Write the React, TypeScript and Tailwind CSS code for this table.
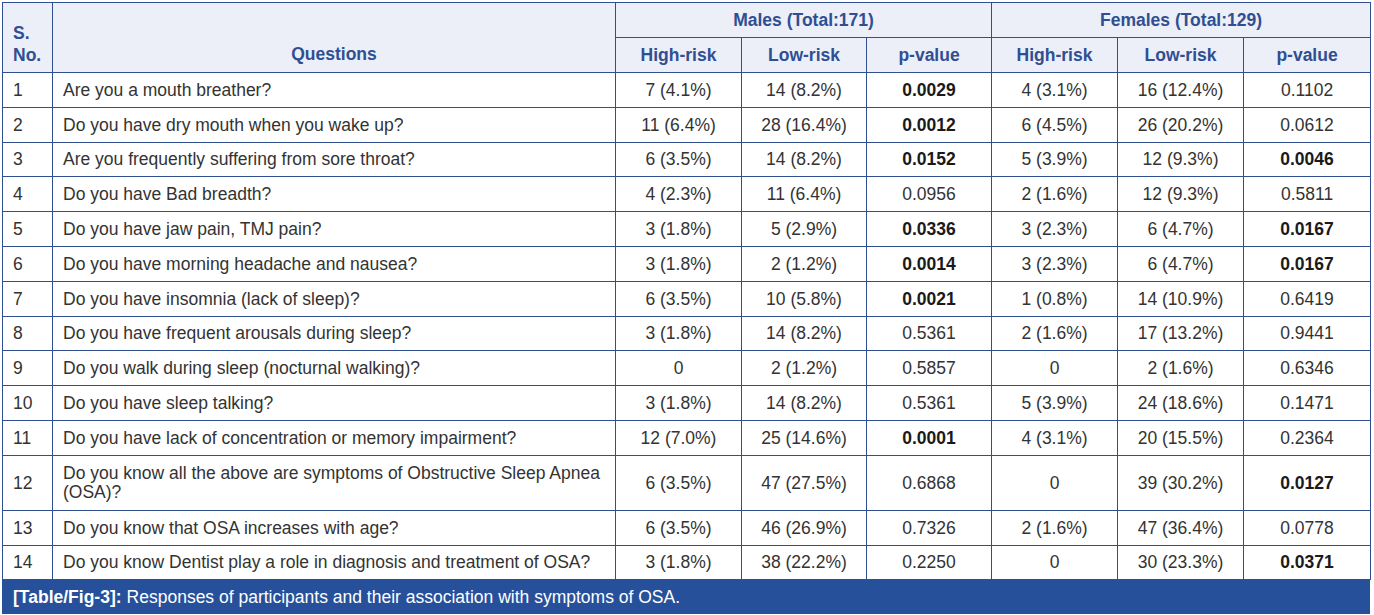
const rows: [string, string, string, string, string, boolean, string, string, string, boolean, number][] = [
  ["1", "Are you a mouth breather?", "7 (4.1%)", "14 (8.2%)", "0.0029", true, "4 (3.1%)", "16 (12.4%)", "0.1102", false, 35],
  ["2", "Do you have dry mouth when you wake up?", "11 (6.4%)", "28 (16.4%)", "0.0012", true, "6 (4.5%)", "26 (20.2%)", "0.0612", false, 35],
  ["3", "Are you frequently suffering from sore throat?", "6 (3.5%)", "14 (8.2%)", "0.0152", true, "5 (3.9%)", "12 (9.3%)", "0.0046", true, 34],
  ["4", "Do you have Bad breadth?", "4 (2.3%)", "11 (6.4%)", "0.0956", false, "2 (1.6%)", "12 (9.3%)", "0.5811", false, 35],
  ["5", "Do you have jaw pain, TMJ pain?", "3 (1.8%)", "5 (2.9%)", "0.0336", true, "3 (2.3%)", "6 (4.7%)", "0.0167", true, 35],
  ["6", "Do you have morning headache and nausea?", "3 (1.8%)", "2 (1.2%)", "0.0014", true, "3 (2.3%)", "6 (4.7%)", "0.0167", true, 35],
  ["7", "Do you have insomnia (lack of sleep)?", "6 (3.5%)", "10 (5.8%)", "0.0021", true, "1 (0.8%)", "14 (10.9%)", "0.6419", false, 35],
  ["8", "Do you have frequent arousals during sleep?", "3 (1.8%)", "14 (8.2%)", "0.5361", false, "2 (1.6%)", "17 (13.2%)", "0.9441", false, 34],
  ["9", "Do you walk during sleep (nocturnal walking)?", "0", "2 (1.2%)", "0.5857", false, "0", "2 (1.6%)", "0.6346", false, 35],
  ["10", "Do you have sleep talking?", "3 (1.8%)", "14 (8.2%)", "0.5361", false, "5 (3.9%)", "24 (18.6%)", "0.1471", false, 35],
  ["11", "Do you have lack of concentration or memory impairment?", "12 (7.0%)", "25 (14.6%)", "0.0001", true, "4 (3.1%)", "20 (15.5%)", "0.2364", false, 35],
  ["12", "Do you know all the above are symptoms of Obstructive Sleep Apnea (OSA)?", "6 (3.5%)", "47 (27.5%)", "0.6868", false, "0", "39 (30.2%)", "0.0127", true, 55],
  ["13", "Do you know that OSA increases with age?", "6 (3.5%)", "46 (26.9%)", "0.7326", false, "2 (1.6%)", "47 (36.4%)", "0.0778", false, 35],
  ["14", "Do you know Dentist play a role in diagnosis and treatment of OSA?", "3 (1.8%)", "38 (22.2%)", "0.2250", false, "0", "30 (23.3%)", "0.0371", true, 34],
]

const th = "border border-[#2f4f8f] bg-[#eceef8] text-[#2f4f93] font-bold text-center px-[6px] py-0"
const td = "border border-[#2f4f8f] px-[10px] py-0 align-middle"

export default function App() {
  return (
    <div className="min-h-screen bg-white pl-[2px] pt-[2px] font-['Liberation_Sans',Arial,sans-serif] text-[17.5px] leading-[19px] text-[#333333]">
      <div className="w-[1368px]">
        <table className="w-[1368px] table-fixed border-collapse">
          <colgroup>
            <col className="w-[50px]" />
            <col className="w-[563px]" />
            <col className="w-[126px]" />
            <col className="w-[125px]" />
            <col className="w-[125px]" />
            <col className="w-[126px]" />
            <col className="w-[126px]" />
            <col className="w-[127px]" />
          </colgroup>
          <thead>
            <tr className="h-[35px]">
              <th rowSpan={2} className={`${th} text-left align-bottom pb-[6px] px-[10px] leading-[22px]`}>
                S.
                <br />
                No.
              </th>
              <th rowSpan={2} className={`${th} align-bottom pb-[8px]`}>Questions</th>
              <th colSpan={3} className={th}>Males (Total:171)</th>
              <th colSpan={3} className={th}>Females (Total:129)</th>
            </tr>
            <tr className="h-[35px]">
              <th className={th}>High-risk</th>
              <th className={th}>Low-risk</th>
              <th className={th}>p-value</th>
              <th className={th}>High-risk</th>
              <th className={th}>Low-risk</th>
              <th className={th}>p-value</th>
            </tr>
          </thead>
          <tbody>
            {rows.map((r) => (
              <tr key={r[0]} style={{ height: r[10] }}>
                <td className={td}>{r[0]}</td>
                <td className={`${td} pr-[8px]`}>{r[1]}</td>
                <td className={`${td} text-center`}>{r[2]}</td>
                <td className={`${td} text-center`}>{r[3]}</td>
                <td className={`${td} text-center ${r[5] ? "font-bold text-[#1a1a1a]" : ""}`}>{r[4]}</td>
                <td className={`${td} text-center`}>{r[6]}</td>
                <td className={`${td} text-center`}>{r[7]}</td>
                <td className={`${td} text-center ${r[9] ? "font-bold text-[#1a1a1a]" : ""}`}>{r[8]}</td>
              </tr>
            ))}
          </tbody>
        </table>
        <div className="flex h-[34px] items-center bg-[#27509b] px-[11px] text-white">
          <span className="font-bold">[Table/Fig-3]:</span>
          <span className="ml-[5px]">Responses of participants and their association with symptoms of OSA.</span>
        </div>
      </div>
    </div>
  )
}
